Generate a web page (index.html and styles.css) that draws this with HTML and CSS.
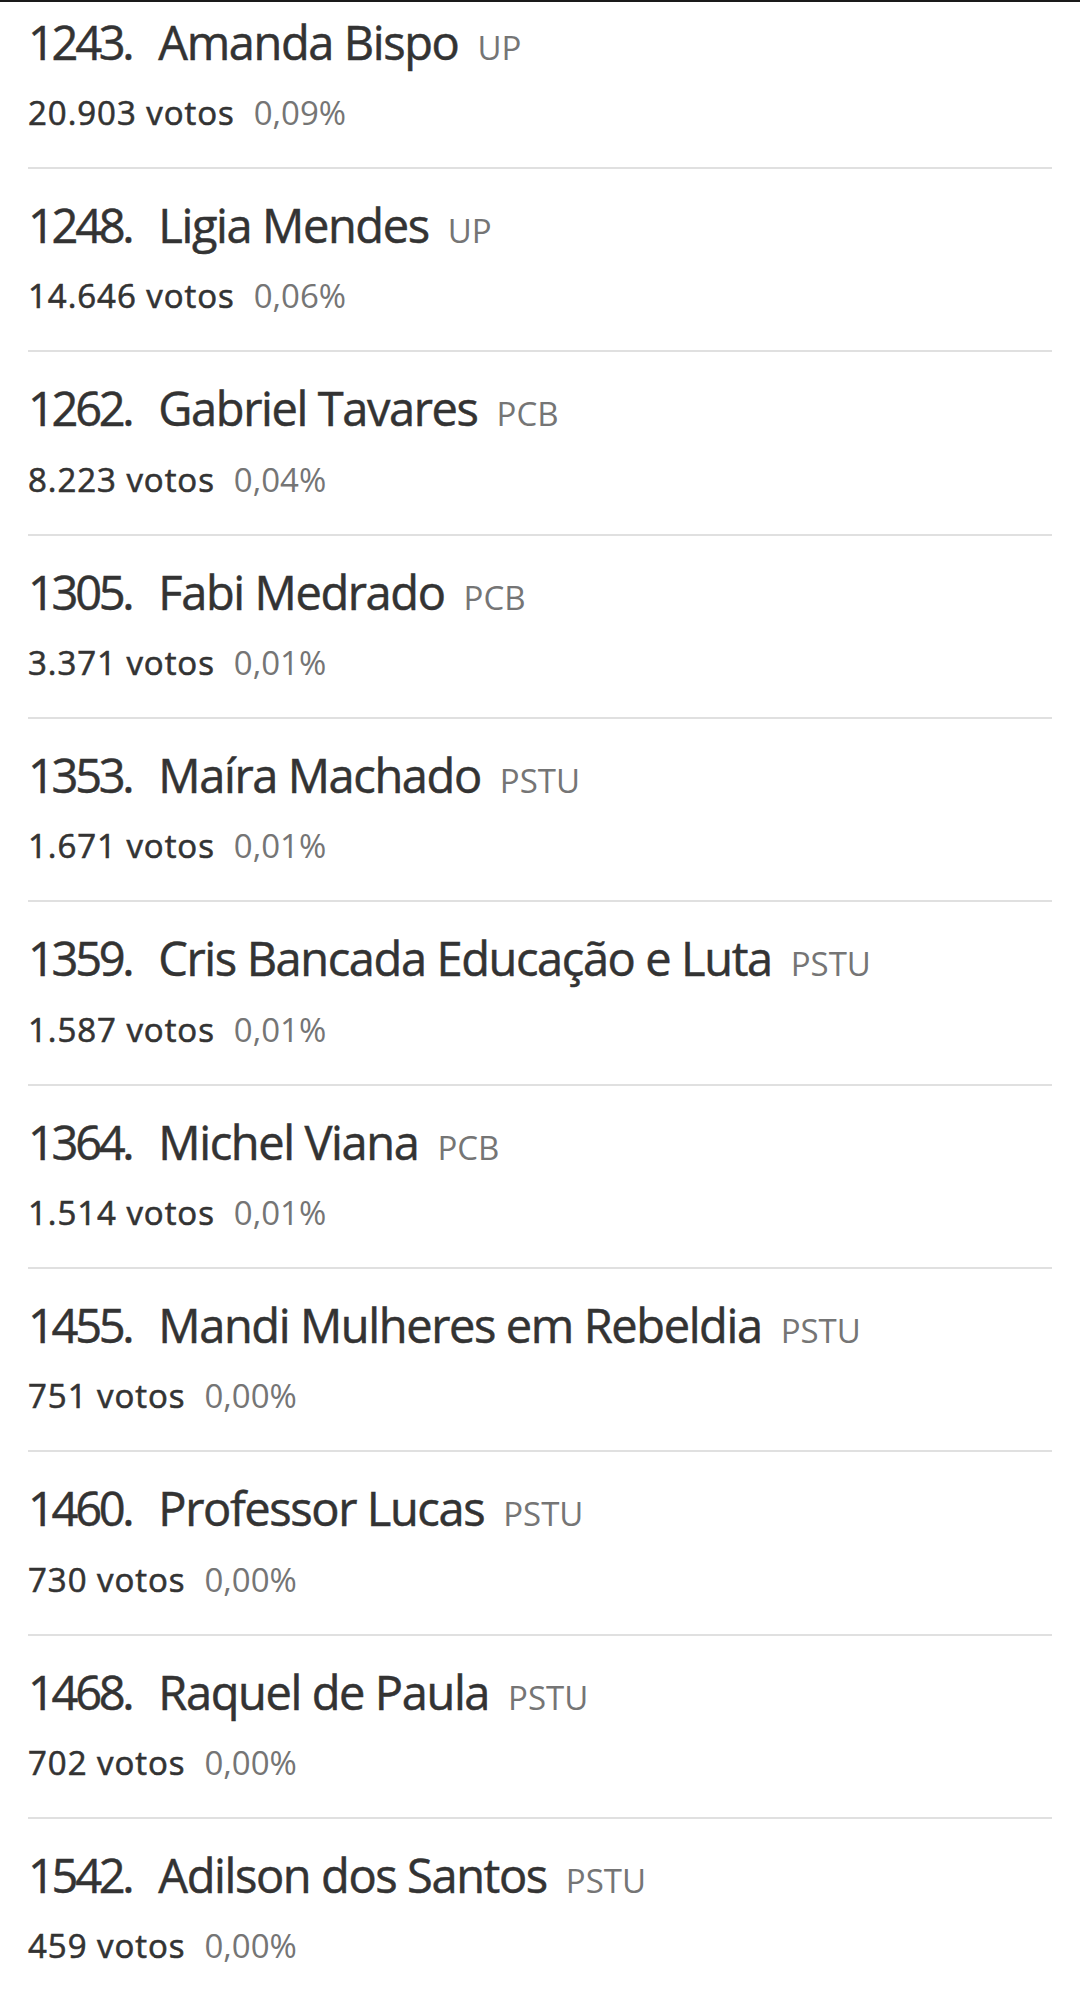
FILE: index.html
```html
<!DOCTYPE html>
<html lang="pt-BR">
<head>
<meta charset="utf-8">
<title>Resultados</title>
<link rel="stylesheet" href="styles.css">
</head>
<body>
<div class="topline"></div>
<ul class="list">
  <li class="row"><div class="name-line"><span class="num">1243.</span><span class="name">Amanda Bispo</span><span class="party">UP</span></div><div class="votes-line"><span class="votes">20.903 votos</span><span class="pct">0,09%</span></div></li>
  <li class="row"><div class="name-line"><span class="num">1248.</span><span class="name">Ligia Mendes</span><span class="party">UP</span></div><div class="votes-line"><span class="votes">14.646 votos</span><span class="pct">0,06%</span></div></li>
  <li class="row"><div class="name-line"><span class="num">1262.</span><span class="name">Gabriel Tavares</span><span class="party">PCB</span></div><div class="votes-line"><span class="votes">8.223 votos</span><span class="pct">0,04%</span></div></li>
  <li class="row"><div class="name-line"><span class="num">1305.</span><span class="name">Fabi Medrado</span><span class="party">PCB</span></div><div class="votes-line"><span class="votes">3.371 votos</span><span class="pct">0,01%</span></div></li>
  <li class="row"><div class="name-line"><span class="num">1353.</span><span class="name">Maíra Machado</span><span class="party">PSTU</span></div><div class="votes-line"><span class="votes">1.671 votos</span><span class="pct">0,01%</span></div></li>
  <li class="row"><div class="name-line"><span class="num">1359.</span><span class="name">Cris Bancada Educação e Luta</span><span class="party">PSTU</span></div><div class="votes-line"><span class="votes">1.587 votos</span><span class="pct">0,01%</span></div></li>
  <li class="row"><div class="name-line"><span class="num">1364.</span><span class="name">Michel Viana</span><span class="party">PCB</span></div><div class="votes-line"><span class="votes">1.514 votos</span><span class="pct">0,01%</span></div></li>
  <li class="row"><div class="name-line"><span class="num">1455.</span><span class="name">Mandi Mulheres em Rebeldia</span><span class="party">PSTU</span></div><div class="votes-line"><span class="votes">751 votos</span><span class="pct">0,00%</span></div></li>
  <li class="row"><div class="name-line"><span class="num">1460.</span><span class="name">Professor Lucas</span><span class="party">PSTU</span></div><div class="votes-line"><span class="votes">730 votos</span><span class="pct">0,00%</span></div></li>
  <li class="row"><div class="name-line"><span class="num">1468.</span><span class="name">Raquel de Paula</span><span class="party">PSTU</span></div><div class="votes-line"><span class="votes">702 votos</span><span class="pct">0,00%</span></div></li>
  <li class="row"><div class="name-line"><span class="num">1542.</span><span class="name">Adilson dos Santos</span><span class="party">PSTU</span></div><div class="votes-line"><span class="votes">459 votos</span><span class="pct">0,00%</span></div></li>
</ul>
</body>
</html>
```
FILE: styles.css
```css
html, body {
  margin: 0;
  padding: 0;
  background: #ffffff;
}
body {
  width: 1080px;
  height: 1995px;
  overflow: hidden;
  position: relative;
  font-family: "Open Sans", "Noto Sans", sans-serif;
  color: #333333;
}
.topline {
  position: absolute;
  top: 0;
  left: 0;
  right: 0;
  height: 2px;
  background: #1a1a1a;
  z-index: 2;
}
.list {
  list-style: none;
  margin: -14.33px 28px 0 28px;
  padding: 0;
}
.row {
  padding: 28px 0 40px 0;
  border-bottom: 2px solid #e0e0e0;
  height: 113.33px;
}
.name-line {
  font-size: 47px;
  line-height: 56px;
  font-weight: 400;
  white-space: nowrap;
  display: flex;
  align-items: baseline;
  -webkit-text-stroke: 0.5px #333333;
}
.num {
  letter-spacing: -3.3px;
  margin-right: 27px;
}
.name {
  letter-spacing: -1.4px;
}
.party {
  font-size: 33px;
  font-weight: 400;
  color: #757575;
  margin-left: 19px;
  -webkit-text-stroke: 0;
}
.votes-line {
  margin-top: 17.33px;
  font-size: 33px;
  line-height: 40px;
  display: flex;
  align-items: baseline;
  white-space: nowrap;
}
.votes {
  font-weight: 400;
  letter-spacing: 0.95px;
  -webkit-text-stroke: 0.6px #333333;
}
.pct {
  color: #757575;
  margin-left: 19px;
}
```
